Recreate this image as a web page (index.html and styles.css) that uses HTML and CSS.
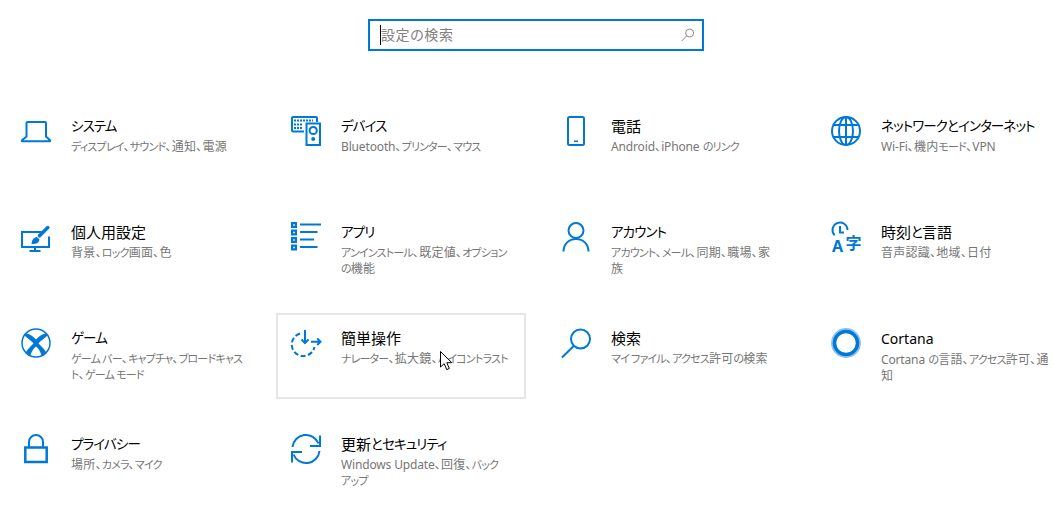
FILE: index.html
```html
<!DOCTYPE html>
<html lang="ja">
  <head>
    <meta charset="UTF-8" />
    <meta name="viewport" content="width=device-width, initial-scale=1.0" />
    <title>設定</title>
    <link rel="stylesheet" href="styles.css">
  </head>
  <body>
    <!-- Search box -->
    <div class="search">
      <span class="caret"></span>
      <span class="search-text">設定の検索</span>
      <svg class="search-icon" viewBox="0 0 14 14"><circle cx="8.6" cy="5" r="4"/><path d="M5.7 7.9L.6 13.2"/></svg>
    </div>

    <!-- Settings tiles. Class k marks kana runs, class l latin runs: both are narrower than kanji here -->
    <div class="tiles">
      <div class="tile">
        <svg class="icon" viewBox="0 0 30 30"><path d="M5.5 20.5V7a1 1 0 0 1 1-1h17.5a1 1 0 0 1 1 1v13.5L29 24.2a.6.6 0 0 1-.4 1H1.4a.6.6 0 0 1-.4-1z"/></svg>
        <div class="tile-text">
          <div class="tile-title"><span class="k">システム</span></div>
          <div class="tile-sub"><span class="k">ディスプレイ</span>、<span class="k">サウンド</span>、通知、電源</div>
        </div>
      </div>

      <div class="tile">
        <svg class="icon" viewBox="0 0 30 30">
          <path d="M13 15.5H2a1 1 0 0 1-1-1V2a1 1 0 0 1 1-1h23a1 1 0 0 1 1 1v4"/>
          <path class="dots" d="M3 4.500h19M3 8.500h8M3 12h8"/>
          <rect x="15.500" y="7.500" width="13.500" height="21.500"/>
          <circle cx="22.200" cy="14.500" r="3.600"/>
          <circle class="solid" cx="22.200" cy="23" r="2"/>
        </svg>
        <div class="tile-text">
          <div class="tile-title"><span class="k">デバイス</span></div>
          <div class="tile-sub"><span class="l">Bluetooth</span>、<span class="k">プリンター</span>、<span class="k">マウス</span></div>
        </div>
      </div>

      <div class="tile">
        <svg class="icon" viewBox="0 0 30 30">
          <rect x="7" y="1" width="16" height="28" rx="1.500"/>
          <rect class="solid" x="13" y="24.500" width="4" height="1.600"/>
        </svg>
        <div class="tile-text">
          <div class="tile-title">電話</div>
          <div class="tile-sub"><span class="l">Android</span>、<span class="l">iPhone</span> <span class="k">のリンク</span></div>
        </div>
      </div>

      <div class="tile">
        <svg class="icon" viewBox="0 0 30 30">
          <circle cx="15" cy="15" r="14"/>
          <ellipse cx="15" cy="15" rx="7" ry="14"/>
          <path d="M15 1v28M2.500 9h25M2.500 21h25"/>
        </svg>
        <div class="tile-text">
          <div class="tile-title"><span class="k">ネットワークとインターネット</span></div>
          <div class="tile-sub"><span class="l">Wi-Fi</span>、機内<span class="k">モード</span>、<span class="l">VPN</span></div>
        </div>
      </div>

      <div class="tile">
        <svg class="icon" viewBox="0 0 30 30">
          <path d="M20.500 10H1v15h27V14.500M14 25v4M8.500 29h11"/>
          <path class="brush" d="M26.800 5.500L18.500 13.800"/>
          <path class="solid" d="M10.500 22c.5-4.500 2-6.500 5.500-7l2.500 2.500c-.5 3.500-3.500 5-8 4.500z"/>
        </svg>
        <div class="tile-text">
          <div class="tile-title">個人用設定</div>
          <div class="tile-sub">背景、<span class="k">ロック</span>画面、色</div>
        </div>
      </div>

      <div class="tile">
        <svg class="icon" viewBox="0 0 30 30">
          <path class="solid" d="M0 0h6v6H0zM0 7.500h6v6H0zM0 15h6v6H0zM0 22.500h6v6H0z"/>
          <path class="hole" d="M2.200 2.200h1.600v1.600H2.200zM2.200 9.700h1.600v1.600H2.200zM2.200 17.200h1.600v1.600H2.200zM2.200 24.700h1.600v1.600H2.200z"/>
          <path d="M9 2.500h21M9 10h17.500M9 17.500h14M9 25h17.500"/>
        </svg>
        <div class="tile-text">
          <div class="tile-title"><span class="k">アプリ</span></div>
          <div class="tile-sub"><span class="k">アンインストール</span>、既定値、<span class="k">オプション</span><br><span class="k">の</span>機能</div>
        </div>
      </div>

      <div class="tile">
        <svg class="icon" viewBox="0 0 30 30">
          <circle cx="15" cy="8.500" r="7.500"/>
          <path d="M2.500 29.500c0-7 5-12.500 12.500-12.500s12.500 5.500 12.500 12.500"/>
        </svg>
        <div class="tile-text">
          <div class="tile-title"><span class="k">アカウント</span></div>
          <div class="tile-sub"><span class="k">アカウント</span>、<span class="k">メール</span>、同期、職場、家<br>族</div>
        </div>
      </div>

      <div class="tile">
        <svg class="icon" viewBox="0 0 30 30">
          <path d="M3.700 13.300A7.500 7.500 0 1 1 16.500 8M9 4v6.500h4"/>
          <text class="icon-a" x="1" y="29.500">A</text>
          <text class="icon-ji" x="14.500" y="27">字</text>
        </svg>
        <div class="tile-text">
          <div class="tile-title">時刻<span class="k">と</span>言語</div>
          <div class="tile-sub">音声認識、地域、日付</div>
        </div>
      </div>

      <div class="tile">
        <svg class="icon" viewBox="0 0 30 30">
          <circle class="thin" cx="15" cy="15" r="14"/>
          <path class="solid" d="M15 11.500C18 8.500 21 6 24.500 5.500L26.500 7.500C23 10.500 19.500 13 17.500 15.500C21.500 19.500 24.500 22.500 25.500 25L20.500 28C20 24 17 20 15 18.500C13 20 10 24 9.500 28L4.500 25C5.500 22.500 8.500 19.500 12.500 15.500C10.500 13 7 10.500 3.500 7.500L5.500 5.500C9 6 12 8.500 15 11.500z"/>
        </svg>
        <div class="tile-text">
          <div class="tile-title"><span class="k">ゲーム</span></div>
          <div class="tile-sub"><span class="k">ゲーム バー</span>、<span class="k">キャプチャ</span>、<span class="k">ブロードキャス</span><br><span class="k">ト</span>、<span class="k">ゲーム モード</span></div>
        </div>
      </div>

      <div class="tile tile-hover">
        <svg class="icon" viewBox="0 0 30 30">
          <path class="dashed" d="M9 5.500A11.500 11.500 0 1 0 23.500 19"/>
          <path d="M14 2v13M10.500 11.500L14 15l3.500-3.500M20 13.700h9.500M26.200 10.400l3.300 3.300-3.300 3.300"/>
        </svg>
        <div class="tile-text">
          <div class="tile-title">簡単操作</div>
          <div class="tile-sub"><span class="k">ナレーター</span>、拡大鏡、<span class="k">ハイコントラスト</span></div>
        </div>
        <svg class="cursor" viewBox="0 0 13 20"><path d="M.5.500v15.500l3.700-3.400 2.500 6 2.600-1.100-2.500-5.800h5z"/></svg>
      </div>

      <div class="tile">
        <svg class="icon" viewBox="0 0 30 30">
          <circle cx="19.500" cy="11" r="9.500"/>
          <path d="M12.700 18L1 29.500"/>
        </svg>
        <div class="tile-text">
          <div class="tile-title">検索</div>
          <div class="tile-sub"><span class="k">マイ ファイル</span>、<span class="k">アクセス</span>許可<span class="k">の</span>検索</div>
        </div>
      </div>

      <div class="tile">
        <svg class="icon" viewBox="0 0 30 30">
          <circle class="halo" cx="15" cy="15" r="13.500"/>
          <circle class="ring" cx="15" cy="15" r="11.500"/>
        </svg>
        <div class="tile-text">
          <div class="tile-title"><span class="l">Cortana</span></div>
          <div class="tile-sub"><span class="l">Cortana</span> <span class="k">の</span>言語、<span class="k">アクセス</span>許可、通<br>知</div>
        </div>
      </div>

      <div class="tile">
        <svg class="icon" viewBox="0 0 30 30">
          <path class="body" d="M4.300 13.500h21.400V28H4.300z"/>
          <path d="M8 13V8a7 7 0 0 1 14 0v5"/>
        </svg>
        <div class="tile-text">
          <div class="tile-title"><span class="k">プライバシー</span></div>
          <div class="tile-sub">場所、<span class="k">カメラ</span>、<span class="k">マイク</span></div>
        </div>
      </div>

      <div class="tile">
        <svg class="icon" viewBox="0 0 30 30">
          <path d="M1.500 13A13.500 13.500 0 0 1 27.500 9.500M29 1.500V12h-10"/>
          <path d="M28.500 17A13.500 13.500 0 0 1 2.500 20.500M1 28.500V18h10"/>
        </svg>
        <div class="tile-text">
          <div class="tile-title">更新<span class="k">とセキュリティ</span></div>
          <div class="tile-sub"><span class="l">Windows Update</span>、回復、<span class="k">バック</span><br><span class="k">アップ</span></div>
        </div>
      </div>
    </div>
  </body>
</html>
```

FILE: styles.css
```css
/* Page */
body {
  margin: 0;
  overflow: hidden;
  background-color: #fff;
  color: #000;
  font-family: "Noto Sans", "Noto Sans CJK JP", sans-serif;
  font-feature-settings: "palt";
}

/* Search box */
.search {
  display: flex;
  align-items: center;
  box-sizing: border-box;
  width: 336px;
  height: 32px;
  margin: 19px 0 50px 368px;
  padding: 0 7px 0 10px;
  border: 2px solid #0078d7;
}

.caret {
  width: 1px;
  height: 20px;
  background-color: #000;
}

.search-text {
  flex: 1;
  margin-bottom: 2px;
  color: #808080;
  font-size: 14px;
  letter-spacing: 0.6px;
}

.search-icon {
  width: 14px;
  height: 14px;
  fill: none;
  stroke: #8a8a8a;
}

/* Tile grid */
.tiles {
  display: grid;
  grid-template-columns: repeat(3, 250px) 238px;
  grid-auto-rows: 86px;
  gap: 20px;
  padding-left: 6px;
}

.tile {
  position: relative;
  display: flex;
  gap: 20px;
  box-sizing: border-box;
  padding: 13px 13px;
  border: 2px solid transparent;
}

.tile-hover {
  border-color: #e6e6e6;
}

.tile-title {
  font-size: 15px;
  line-height: 20px;
  white-space: nowrap;
}

.tile-sub {
  margin-top: 3px;
  color: #767676;
  font-size: 12px;
  line-height: 16px;
  letter-spacing: 0.25px;
  white-space: nowrap;
}

.tile-title .k {
  font-size: 13.5px;
  line-height: 1;
  letter-spacing: -0.9px;
  vertical-align: 1px;
}

.tile-title .l {
  font-size: 14px;
}

.tile-sub .k {
  font-size: 11px;
  line-height: 1;
  letter-spacing: -0.8px;
}

.tile-sub .l {
  letter-spacing: -0.15px;
}

/* Icons */
.icon {
  flex: none;
  width: 30px;
  height: 30px;
  overflow: visible;
  fill: none;
  stroke: #0078d7;
  stroke-width: 2;
}

.icon .solid {
  fill: #0078d7;
  stroke: none;
}

.icon .hole {
  fill: #fff;
  stroke: none;
}

.icon .dots {
  stroke-dasharray: 2 1;
}

.icon .brush {
  stroke-width: 3.5;
  stroke-linecap: round;
}

.icon .body {
  stroke-width: 2.5;
}

.icon .thin {
  stroke-width: 1.5;
}

.icon .dashed {
  stroke-dasharray: 5 2.5;
}

.icon .halo {
  stroke: #8cc4ee;
  stroke-width: 3;
}

.icon .ring {
  stroke-width: 3.5;
}

.icon-a {
  fill: #0078d7;
  stroke: none;
  font-size: 16px;
  font-weight: 700;
}

.icon-ji {
  fill: #0078d7;
  stroke: none;
  font-size: 16px;
  font-weight: 700;
}

/* Mouse pointer over the hovered tile */
.cursor {
  position: absolute;
  left: 162px;
  top: 36px;
  width: 13px;
  height: 20px;
  fill: #fff;
  stroke: #000;
}
```
